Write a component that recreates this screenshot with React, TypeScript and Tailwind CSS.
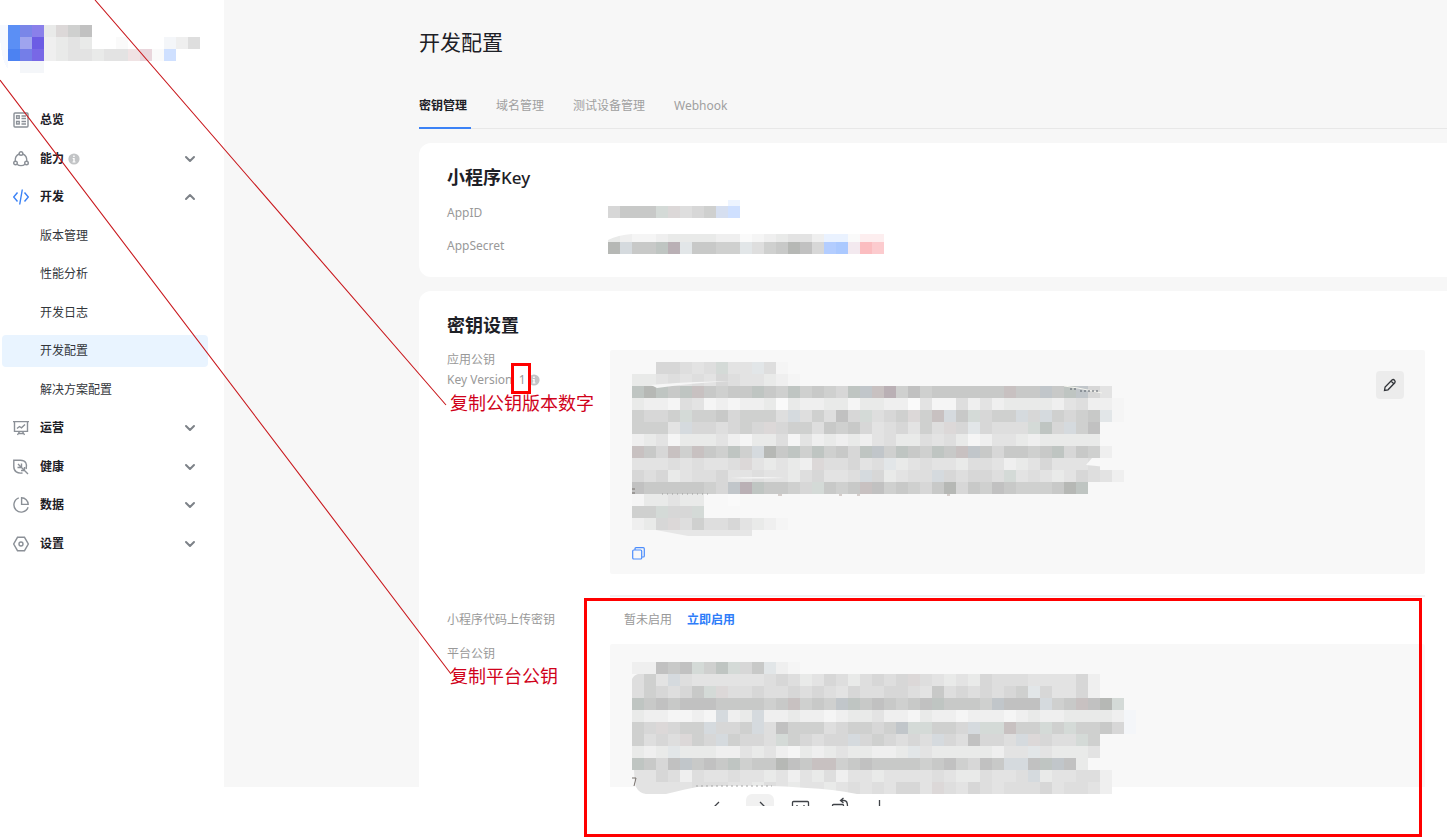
import type { ReactNode } from "react";
import { ChevronDown, ChevronUp } from "lucide-react";

const CELL = 12;

// one letter per shade, dark to light, then a few tinted ones
const SHADES: Record<string, string> = {
  a: "#b6b8b5", b: "#c1c1c1", c: "#c8c9c8", d: "#cfd0cf", e: "#d7d7d7", f: "#dedede",
  g: "#e3e3e3", h: "#e9eae9", i: "#efefef", j: "#f5f5f5", k: "#fafafa",
  p: "#c8c1c1", m: "#bab0b5", n: "#c1c6ca", t: "#bfc5c2", u: "#d5dade", v: "#d4dad7", w: "#dcd8d8", x: "#e2e6e8",
  B: "#5b8ff5", C: "#7a86e8", D: "#8a80ea", E: "#9fa4ee", F: "#6c5ce4", G: "#4c82f2", H: "#747ee8", I: "#7868e6",
  L: "#cfe0ff", M: "#eaf2ff", N: "#b3cdff", O: "#abc9ff", P: "#fbbdc0", Q: "#fccbce", R: "#fdeeef", S: "#f3e9ef",
  T: "#f4f6f9", U: "#d6dff0", V: "#e9d6dc", W: "#f0e3e4",
};

const LOGO = [
  "BCDhwdb.........",
  "BEFihgh..k...Tif",
  "GHIihgghggWVkL..",
  ".TT.............",
];

const APP_ID = ["ecccvwfedUL"];
const APP_SECRET_TOP = "hijjihhhhiikjihggiMMkRR";
const APP_SECRET = ["aucctmxccddxfdcabeNOSPQ"];

const PUBLIC_KEY = [
  "..eefgfvggxfj",
  "hhgfgfgefgghij",
  "tatctpcdcctcdtdcdetnpmdbdccccccpccnctneg",
  "hiijfgjijiihkhiihhjhhiikgjjfigihhhhigfiij",
  "deedvddcedddfufdfbevfedwdpucveddueudedcxj",
  "dddgueefedeweddfcdcegfegdfwexefffvteudb",
  "ihgjhhhgijhhfjgihihigfhhfgfhjigghihhhhh",
  "pcepdpcdtduactdtdcetndtcdtcpnceccdctecdi",
  "gggfgfggfwghghiwffegfxhgfgghffgihgegggf",
  "efehgffeggfgghfeggfuehgffuefeefvgfghgefgi",
  "bcccccdenmtccdevcdcpbdcdecaecdbcdddcat",
  "jhhghh..k",
  "ddveev",
  "ihewfdffeghij",
];

const PLATFORM_KEY = [
  "iibcbvdtvecxij",
  "fdgufggggggfefhgefhfefewfghghefffggggei",
  "fdefecvwffeffefefgeffeefgcfefefedxeggei",
  "tcbcbbbccccdcpdcdntcbcdcbtcccdnbbbudcpbav",
  "hiijjijuihuiihiijihhgiijhiijiiijihiihhhhiT",
  "deweddueedufbdddfeddednvvddeuvvpddvdvddceT",
  "dfefwdeudeefvdefeeuedefefuefbeefuweffvd",
  "hihxhhhiighgijhihghhiihxghhhhhiggxghhhg",
  "tcebncbctdccabcppdcbccccdcbdebcuubtnbh",
  "ggefifggfgghgighfigghggggfghhfggfuhggffi",
  "gggggfffgghfghgghgfgfgeegwfgefgfffegffgi",
];

function Mosaic({ rows, label, children }: { rows: string[]; label: string; children?: ReactNode }) {
  const width = Math.max(...rows.map((r) => r.length)) * CELL;
  return (
    <svg role="img" aria-label={label} width={width} height={rows.length * CELL} shapeRendering="crispEdges" className="block shrink-0 overflow-visible">
      {rows.map((row, y) =>
        row.split("").map((c, x) =>
          c === "." ? null : <rect key={`${x}-${y}`} x={x * CELL} y={y * CELL} width={CELL} height={CELL} fill={SHADES[c]} />
        )
      )}
      {children}
    </svg>
  );
}

function NavIcon({ children, className = "text-[#8b9097]" }: { children: ReactNode; className?: string }) {
  return (
    <svg viewBox="0 0 16 16" fill="none" stroke="currentColor" strokeWidth="1.4" className={`size-4 shrink-0 ${className}`}>
      {children}
    </svg>
  );
}

function InfoDot() {
  return (
    <svg viewBox="0 0 12 12" className="size-3 shrink-0">
      <circle cx="6" cy="6" r="5.6" fill="#c2c4c6" />
      <path d="M5.2 2.6h1.5v1.3H5.2zM4.7 5h2v3.4h.8v1H4.5v-1h.8V6h-.6z" fill="#fff" />
    </svg>
  );
}

interface NavItem {
  name: string; icon?: ReactNode; info?: boolean; arrow?: "up" | "down"; active?: boolean;
}

const NAV: NavItem[] = [
  {
    name: "总览",
    icon: (
      <NavIcon>
        <rect x="1" y="1" width="14" height="14" rx="1" />
        <rect x="3.6" y="3.8" width="2.6" height="2.6" />
        <rect x="3.6" y="9.4" width="2.6" height="2.6" />
        <path d="M8.5 4H13M8.500 6.500H13M8.500 9.500H13M8.500 12H13" />
      </NavIcon>
    ),
  },
  {
    name: "能力", info: true, arrow: "down",
    icon: (
      <NavIcon>
        <circle cx="8" cy="2.5" r="1.8" />
        <circle cx="2.5" cy="12" r="1.8" />
        <circle cx="13.5" cy="12" r="1.8" />
        <path d="M6.2 3C3.6 4 2 7 2.2 10.2M9.8 3c2.6 1 4.2 4 4 7.2M4 13.3c2.2 1.8 5.8 1.8 8 0" />
      </NavIcon>
    ),
  },
  {
    name: "开发", arrow: "up",
    icon: (
      <NavIcon className="text-[#3b82f6]">
        <path d="M4.5 3.5.7 8l3.8 4.500M11.500 3.500 15.300 8l-3.800 4.500M9.300.500 6.700 15.500" />
      </NavIcon>
    ),
  },
  { name: "版本管理" },
  { name: "性能分析" },
  { name: "开发日志" },
  { name: "开发配置", active: true },
  { name: "解决方案配置" },
  {
    name: "运营", arrow: "down",
    icon: (
      <NavIcon>
        <path d="M0 1.6h16M1.5 1.6v9.8h13V1.6M4 8.500l2.500-2 2 1.300L12 4.500M6.500 11.500 4.500 15M9.500 11.500l2 3.500M6 13.500h4" />
      </NavIcon>
    ),
  },
  {
    name: "健康", arrow: "down",
    icon: (
      <NavIcon>
        <path d="M9.500 14C4.500 14.800.800 12.500.800 7.500V1.300h6.700c5 0 7 3.200 5.700 8.700M5 5l10 10M8.500 4.500v4H4.500M11.500 8v3.500H8" />
      </NavIcon>
    ),
  },
  {
    name: "数据", arrow: "down",
    icon: (
      <NavIcon>
        <path d="M5.8.9a7.300 7.300 0 1 0 9.300 9.400M8.600.8v6.600h6.600A6.800 6.800 0 0 0 8.600.8z" />
      </NavIcon>
    ),
  },
  {
    name: "设置", arrow: "down",
    icon: (
      <NavIcon>
        <path d="M4.5 1.3h7L15.3 8l-3.800 6.700h-7L.7 8z" />
        <circle cx="8" cy="8" r="2" />
      </NavIcon>
    ),
  },
];

const TABS = ["密钥管理", "域名管理", "测试设备管理", "Webhook"];

function Sidebar() {
  return (
    <aside className="w-56 shrink-0 bg-white pt-[25px]">
      <div className="h-[79px] pl-2">
        <Mosaic rows={LOGO} label="logo">
          <path d="M-8 0h8v44q-6-6-8-32z" fill="#f6f9ff" />
        </Mosaic>
      </div>
      <nav className="flex h-[456px] flex-col justify-between pr-4 pl-0.5">
        {NAV.map((item) => (
          <button
            key={item.name}
            className={`flex h-8 items-center rounded-sm pr-2.5 pl-[11px] text-left text-xs ${item.active ? "bg-[#e9f4ff]" : ""} ${item.icon ? "font-bold text-[#1d2026]" : "text-[#33363b]"}`}
          >
            <span className="w-[27px]">{item.icon}</span>
            <span className="mr-1">{item.name}</span>
            {item.info && <InfoDot />}
            {item.arrow === "down" && <ChevronDown className="ml-auto size-4 text-[#7d8288]" strokeWidth={3} />}
            {item.arrow === "up" && <ChevronUp className="ml-auto size-4 text-[#7d8288]" strokeWidth={3} />}
          </button>
        ))}
      </nav>
    </aside>
  );
}

function Row({ label, className = "", children }: { label: ReactNode; className?: string; children: ReactNode }) {
  return (
    <div className={`flex ${className}`}>
      <div className="w-[163px] shrink-0 text-xs leading-5 text-[#999]">{label}</div>
      {children}
    </div>
  );
}

function Toolbar() {
  const btn = "size-7 shrink-0 rounded-md";
  return (
    <div className="mt-[7px] ml-[482px] flex h-3 gap-3 overflow-hidden text-[#3f4247]">
      <button aria-label="上一页" className={btn}>
        <svg viewBox="0 0 28 28" fill="none" stroke="currentColor" strokeWidth="1.3"><path d="m13 8-6 6 6 6" /></svg>
      </button>
      <button aria-label="下一页" className={`${btn} bg-[#f1f1f1]`}>
        <svg viewBox="0 0 28 28" fill="none" stroke="currentColor" strokeWidth="1.3"><path d="m14 8 6 6-6 6" /></svg>
      </button>
      <button aria-label="原始尺寸" className={btn}>
        <svg viewBox="0 0 28 28" fill="none" stroke="currentColor" strokeWidth="1.3"><rect x="6.5" y="7.5" width="16" height="13" rx="1" /><path d="M11 11v5M18 11v5" /></svg>
      </button>
      <button aria-label="旋转" className={btn}>
        <svg viewBox="0 0 28 28" fill="none" stroke="currentColor" strokeWidth="1.3"><path d="M6.500 20v-8.500q0-1 1-1h9q1 0 1 1V20M15 6.500h3q3.500 0 3.500 5.500M17.500 4 14.500 6.500l3 2.500" /></svg>
      </button>
      <button aria-label="下载" className={btn}>
        <svg viewBox="0 0 28 28" fill="none" stroke="currentColor" strokeWidth="1.3"><path d="M13.5 6v13M9 15l4.500 4.500L18 15" /></svg>
      </button>
    </div>
  );
}

// red marker lines, boxes and captions lying over the page
function Annotations() {
  return (
    <div className="pointer-events-none absolute inset-0 z-20">
      <svg className="absolute top-0 left-0 h-[690px] w-[460px]" stroke="#c9191e" strokeWidth="1.1">
        <path d="M95 0 446 405M0 80 451 674" />
      </svg>
      <div className="absolute top-[363px] left-[511px] h-[31px] w-5 border-3 border-[#f00]" />
      <div className="absolute top-[598px] left-[584px] h-[239px] w-[838px] border-3 border-[#f00]" />
      <p className="absolute top-[389px] left-[450px] text-lg leading-7 whitespace-nowrap text-[#d0021b]">复制公钥版本数字</p>
      <p className="absolute top-[662px] left-[450px] text-lg leading-7 whitespace-nowrap text-[#d0021b]">复制平台公钥</p>
    </div>
  );
}

export default function App() {
  return (
    <div className="relative flex min-h-screen overflow-hidden bg-white font-['Noto_Sans','Noto_Sans_CJK_SC',sans-serif]">
      <Sidebar />
      <div className="min-w-0 flex-1">
        <main className="bg-[#f7f7f7] pt-7 pl-[195px]">
          <h1 className="text-[21px] leading-7 text-[#1d2026]">开发配置</h1>
          <div className="mt-10 flex gap-[25px] border-b border-[#e8e8e8]">
            {TABS.map((tab, i) => (
              <button
                key={tab}
                className={`-mb-px border-b-2 pr-1 pb-[11px] text-xs leading-5 ${i === 0 ? "border-[#3b82f6] font-bold text-[#1d2026]" : "border-transparent text-[#a0a0a0]"}`}
              >
                {tab}
              </button>
            ))}
          </div>

          <section className="mt-3.5 rounded-l-xl bg-white px-7 pt-5 pb-[21px]">
            <h2 className="text-lg leading-7 font-bold text-[#1d2026]">
              小程序<span className="text-[17px] font-medium">Key</span>
            </h2>
            <Row label="AppID" className="mt-[11px]">
              <div className="-ml-0.5 pt-[3px]">
                <Mosaic rows={APP_ID} label="AppID">
                  <rect x="120" y="-6" width="12" height="6" fill="#edf4ff" />
                </Mosaic>
              </div>
            </Row>
            <Row label="AppSecret" className="mt-[13px]">
              <div className="-ml-0.5 pt-1.5">
                <Mosaic rows={APP_SECRET} label="AppSecret">
                  <g transform="translate(0 -8)">
                    {APP_SECRET_TOP.split("").map((c, x) => (
                      <rect key={x} x={x * CELL} width={CELL} height="8" fill={SHADES[c]} />
                    ))}
                    <path d="M0 0h24Q10 1 0 6z" fill="#fff" shapeRendering="auto" />
                  </g>
                </Mosaic>
              </div>
            </Row>
          </section>

          <section className="mt-3.5 rounded-tl-xl bg-white pt-5 pr-[22px] pl-7">
            <h2 className="text-lg leading-7 font-bold text-[#1d2026]">密钥设置</h2>
            <Row
              className="mt-[11px]"
              label={
                <>
                  <div>应用公钥</div>
                  <div className="flex items-center gap-0.5">Key Version&nbsp; 1 <InfoDot /></div>
                </>
              }
            >
              <div className="relative h-56 min-w-0 flex-1 rounded-xs bg-[#f8f8f8] px-[22px] pt-3">
                <Mosaic rows={PUBLIC_KEY} label="应用公钥">
                  <g shapeRendering="auto">
                    <path d="M19 23q30-3 80-4-40 2-74 7z" fill="#f6f6f6" />
                    <path d="M98 116q25-2 55 0-28 1-55 0z" fill="#f3f3f3" />
                    <path d="M454 103 460 96h21v11q-10-3-27-4z" fill="#f8f8f8" />
                    <path d="M24 168h96v6H56z" fill="#e6e6e6" />
                    <path d="M0 127h3M0 131h3" stroke="#77706c" />
                    <path d="M30 132h50" stroke="#999" strokeDasharray="1 4" />
                    <path d="M432 24l14 2 24 5" fill="none" stroke="#f5f5ef" strokeWidth="1" />
                    <path d="M438 27h7M448 29h20" stroke="#555c66" strokeDasharray="2 2" />
                    <path d="M146 133h4M207 133h3M225 133h3M315 133h3" stroke="#b3a5a0" />
                  </g>
                </Mosaic>
                <button aria-label="复制" className="mt-[17px] block text-[#4c8dfc]">
                  <svg viewBox="0 0 13 13" fill="none" stroke="currentColor" strokeWidth="1.2" className="size-[13px]">
                    <rect x="0.7" y="3" width="9" height="9" rx="1" />
                    <path d="M3 3V1.700q0-1 1-1h7.300q1 0 1 1V9q0 1-1 1H10" />
                  </svg>
                </button>
                <button aria-label="编辑" className="absolute top-[21px] right-[21px] flex size-7 items-center justify-center rounded-sm bg-[#ececec] text-[#303338]">
                  <svg viewBox="0 0 14 14" fill="none" stroke="currentColor" strokeWidth="1.3" className="size-3.5">
                    <path d="m1.500 12.500.600-3.500L9 2q1.300-1 2.500.200T11.800 4.800L5 11.800zM8 3l3 3" />
                  </svg>
                </button>
              </div>
            </Row>
            <div className="mt-[21px] ml-[163px] h-0.5 bg-[#f1f2f4]" />
            <Row label="小程序代码上传密钥" className="mt-[13px]">
              <div className="flex gap-[15px] pl-3.5 text-xs leading-5">
                <span className="text-[#999]">暂未启用</span>
                <button className="font-bold text-[#2e7cf9]">立即启用</button>
              </div>
            </Row>
            <Row label="平台公钥" className="mt-3.5">
              <div className="relative z-10 h-[143px] min-w-0 flex-1 rounded-t-xs bg-[#f8f8f8] px-[22px] pt-[18px]">
                <Mosaic rows={PLATFORM_KEY} label="平台公钥">
                  <g shapeRendering="auto">
                    <path d="M0 12h6Q2 13 0 17z" fill="#f8f8f8" />
                    <path d="M0 108v17h4q-2-8-2-17z" fill="#f8f8f8" />
                    <path d="M0 125h4q3 6 10 7H0z" fill="#fff" />
                    <path d="M34 132q20-5 31-7 60-3 110 1 25 1 50 6z" fill="#fff" />
                    <path d="M0 116h4l-2 8" stroke="#77706c" fill="none" />
                    <path d="M64 124h76" stroke="#a5a5a5" strokeDasharray="2 3" />
                  </g>
                </Mosaic>
              </div>
            </Row>
          </section>
        </main>
        <Toolbar />
      </div>
      <Annotations />
    </div>
  );
}
